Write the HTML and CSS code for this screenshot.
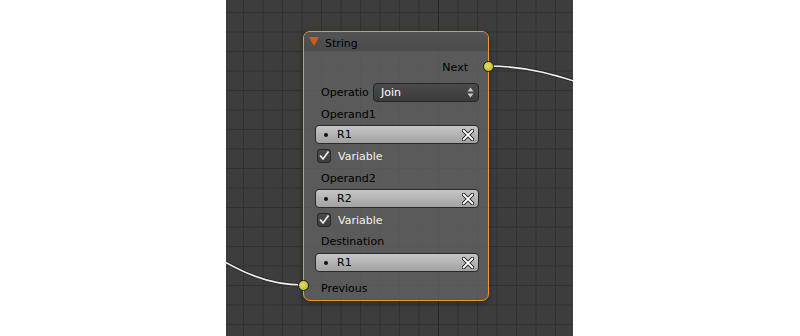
FILE: index.html
```html
<!DOCTYPE html>
<html lang="en">
<head>
  <meta charset="UTF-8">
  <title>Node Editor - String</title>
  <link rel="stylesheet" href="styles.css">
</head>
<body>

  <!-- Node editor canvas -->
  <div class="canvas">
    <svg class="grid" width="347" height="336">
      <defs>
        <pattern id="cells" x="17" y="12" width="19.5" height="19.5" patternUnits="userSpaceOnUse">
          <rect x="0" y="0" width="1" height="19.5" fill="#313131"/>
          <rect x="0" y="0" width="19.5" height="1" fill="#313131"/>
        </pattern>
      </defs>
      <rect width="347" height="336" fill="#3d3d3d"/>
      <rect width="347" height="336" fill="url(#cells)"/>
      <rect x="212" y="0" width="1" height="336" fill="#272727"/>
    </svg>

    <!-- links -->
    <svg class="links" width="347" height="336">
      <path d="M262 66 C 300 66, 330 74, 380 92" class="link-edge"/>
      <path d="M262 66 C 300 66, 330 74, 380 92" class="link"/>
      <path d="M-40 240 C 0 262, 30 285, 77 285" class="link-edge"/>
      <path d="M-40 240 C 0 262, 30 285, 77 285" class="link"/>
    </svg>

    <!-- String node -->
    <div class="node">
      <div class="node-header">
        <span class="collapse"></span>
        <span class="node-title">String</span>
      </div>
      <div class="node-body">
        <div class="row output">
          Next
          <span class="socket socket-out"></span>
        </div>
        <div class="row prop">
          <span class="prop-label">Operatio</span>
          <div class="dropdown">
            <span>Join</span>
            <svg class="updown" width="7" height="11" viewBox="0 0 7 11">
              <path d="M3.5 0.5 L6.5 4.5 L0.5 4.5 Z" fill="#c8c8c8"/>
              <path d="M3.5 10.5 L6.5 6.5 L0.5 6.5 Z" fill="#c8c8c8"/>
            </svg>
          </div>
        </div>
        <div class="row label">Operand1</div>
        <div class="field">
          <span class="dot"></span>
          <span class="field-text">R1</span>
          <svg class="clear" width="12" height="12" viewBox="0 0 12 12">
            <path d="M1.5 1.5 L10.5 10.5 M10.5 1.5 L1.5 10.5" class="x-edge"/>
            <path d="M1.5 1.5 L10.5 10.5 M10.5 1.5 L1.5 10.5" class="x-mark"/>
          </svg>
        </div>
        <div class="row check">
          <span class="box">
            <svg width="12" height="12" viewBox="0 0 12 12"><path d="M2 5.5 L5 9 L10.5 1.5" class="tick"/></svg>
          </span>
          Variable
        </div>
        <div class="row label gap">Operand2</div>
        <div class="field">
          <span class="dot"></span>
          <span class="field-text">R2</span>
          <svg class="clear" width="12" height="12" viewBox="0 0 12 12">
            <path d="M1.5 1.5 L10.5 10.5 M10.5 1.5 L1.5 10.5" class="x-edge"/>
            <path d="M1.5 1.5 L10.5 10.5 M10.5 1.5 L1.5 10.5" class="x-mark"/>
          </svg>
        </div>
        <div class="row check">
          <span class="box">
            <svg width="12" height="12" viewBox="0 0 12 12"><path d="M2 5.5 L5 9 L10.5 1.5" class="tick"/></svg>
          </span>
          Variable
        </div>
        <div class="row label">Destination</div>
        <div class="field field-last">
          <span class="dot"></span>
          <span class="field-text">R1</span>
          <svg class="clear" width="12" height="12" viewBox="0 0 12 12">
            <path d="M1.5 1.5 L10.5 10.5 M10.5 1.5 L1.5 10.5" class="x-edge"/>
            <path d="M1.5 1.5 L10.5 10.5 M10.5 1.5 L1.5 10.5" class="x-mark"/>
          </svg>
        </div>
        <div class="row input">
          <span class="socket socket-in"></span>
          Previous
        </div>
      </div>
    </div>
  </div>

</body>
</html>
```

FILE: styles.css
```css
* {
  box-sizing: border-box;
}
body {
  margin: 0;
  background-color: #ffffff;
  font-family: "DejaVu Sans", sans-serif;
  font-size: 11px;
}
.canvas {
  position: relative;
  width: 347px;
  height: 336px;
  margin-left: 226px;
  overflow: hidden;
}
.grid, .links {
  position: absolute;
  left: 0;
  top: 0;
}
.link-edge {
  fill: none;
  stroke: #1e1e1e;
  stroke-width: 3.5;
  stroke-opacity: 0.6;
}
.link {
  fill: none;
  stroke: #f2f2f2;
  stroke-width: 1.6;
}

/* node */
.node {
  position: absolute;
  left: 77px;
  top: 31px;
  width: 186px;
  height: 270px;
  border: 1px solid #f0962c;
  border-radius: 7px;
  background-color: rgba(97, 97, 97, 0.8);
  box-shadow: 0 2px 6px rgba(0,0,0,0.35);
}
.node-header {
  height: 19px;
  display: flex;
  align-items: center;
  padding: 3px 0 0 5px;
  border-radius: 6px 6px 0 0;
  background: linear-gradient(#535353, #4b4b4b);
  color: #000;
}
.collapse {
  width: 0;
  height: 0;
  border-left: 5px solid transparent;
  border-right: 5px solid transparent;
  border-top: 9px solid #d2581c;
  margin-right: 6px;
  margin-top: -3px;
}
.node-body {
  padding: 7px 9px 0 17px;
  color: #000;
}
.row {
  height: 18px;
  display: flex;
  align-items: center;
}
.output {
  justify-content: flex-end;
  padding-right: 11px;
  position: relative;
}
.prop {
  height: 20px;
  margin-top: 6px;
  justify-content: space-between;
}
.label {
  margin-top: 3px;
}
.label.gap {
  margin-top: 4px;
}
.dropdown {
  width: 106px;
  height: 19px;
  display: flex;
  align-items: center;
  justify-content: space-between;
  padding: 0 4px 0 7px;
  border: 1px solid #252525;
  border-radius: 4px;
  background: linear-gradient(#4a4a4a, #3c3c3c);
  color: #ffffff;
}
.field {
  height: 19px;
  margin-top: 2px;
  margin-left: -6px;
  display: flex;
  align-items: center;
  padding: 0 4px 0 8px;
  border: 1px solid #2a2a2a;
  border-radius: 4px;
  background: linear-gradient(#c6c6c6, #a2a2a2);
  color: #000;
}
.field-last {
  margin-top: 3px;
}
.dot {
  width: 4px;
  height: 4px;
  border-radius: 50%;
  background-color: #111;
  margin-right: 9px;
}
.field-text {
  flex: 1;
}
.x-edge {
  stroke: #111;
  stroke-width: 3.6;
  stroke-linecap: round;
}
.x-mark {
  stroke: #fff;
  stroke-width: 1.8;
  stroke-linecap: round;
}
.check {
  margin-top: 3px;
  color: #f0f0f0;
  margin-left: -4px;
}
.box {
  width: 14px;
  height: 14px;
  display: flex;
  align-items: center;
  justify-content: center;
  margin-right: 7px;
  border: 1px solid #262626;
  border-radius: 3px;
  background: linear-gradient(#4a4a4a, #3e3e3e);
}
.tick {
  fill: none;
  stroke: #f2f2f2;
  stroke-width: 1.6;
}
.input {
  margin-top: 7px;
  position: relative;
}
.socket {
  position: absolute;
  width: 11px;
  height: 11px;
  border-radius: 50%;
  border: 1px solid #202010;
  background: radial-gradient(circle at 40% 40%, #e0e060, #b4b42a);
}
.socket-out {
  right: -15px;
  top: 3px;
}
.socket-in {
  left: -23px;
  top: 1px;
}
```
